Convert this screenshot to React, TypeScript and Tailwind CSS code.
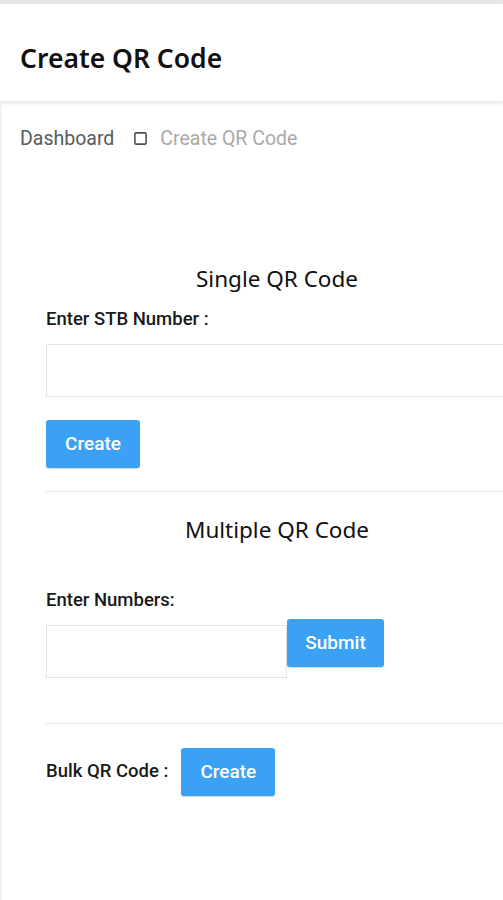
import { Square } from 'lucide-react';

const heading = "font-['Noto_Sans',sans-serif]";
const body = "font-['Roboto',sans-serif]";

function BlueButton({ label, className = '' }: { label: string; className?: string }) {
  return (
    <button
      className={`h-[48px] w-[94px] shrink-0 rounded-[3px] bg-[#3aa1f4] text-[19px] font-medium text-white shadow-[0_1px_1px_rgba(0,0,0,0.15)] ${body} ${className}`}
    >
      {label}
    </button>
  );
}

export default function App() {
  return (
    <div className="h-[900px] w-[503px] overflow-hidden bg-white">
      <div className="h-[4px] bg-[#e6e6e6]" />
      <header className="flex h-[98px] items-center bg-white px-[20px] pt-[12px] shadow-[0_2px_3px_rgba(0,0,0,0.08)] border-b border-[#e9e9e9]">
        <h1 className={`${heading} text-[26.5px] font-semibold text-[#111]`}>Create QR Code</h1>
      </header>

      <div className="h-[800px] border-l-2 border-[#f3f3f3]">
        <nav className={`flex items-center pl-[18px] pt-[22px] text-[19.5px] ${body}`}>
          <span className="text-[#545b61]">Dashboard</span>
          <Square className="ml-[19px] h-[15px] w-[15px] text-[#4a4f54]" strokeWidth={2.5} />
          <span className="ml-[12px] text-[#a9a9a9]">Create QR Code</span>
        </nav>

        <section className="ml-[44px] mt-[111px] w-[462px]">
          <h2 className={`${heading} text-center text-[22.5px] leading-[30px] text-[#111]`}>Single QR Code</h2>
          <label className={`${body} mt-[14px] block text-[18.5px] font-medium leading-[22px] text-[#1a1a1a]`}>
            Enter STB Number :
          </label>
          <input className="mt-[14px] block h-[53px] w-full border border-[#e4e4e4] bg-white outline-none" />
          <BlueButton label="Create" className="mt-[23px]" />
          <div className="mt-[23px] h-px bg-[#e6e6e6]" />

          <h2 className={`${heading} mt-[23px] text-center text-[22.5px] leading-[30px] text-[#111]`}>Multiple QR Code</h2>
          <label className={`${body} mt-[44px] block text-[18.5px] font-medium leading-[22px] text-[#1a1a1a]`}>
            Enter Numbers:
          </label>
          <div className="mt-[8px] flex items-start">
            <input className="mt-[6px] block h-[53px] w-[241px] border border-[#e4e4e4] bg-white outline-none" />
            <BlueButton label="Submit" className="w-[97px]" />
          </div>
          <div className="mt-[45px] h-px bg-[#e6e6e6]" />

          <div className="mt-[24px] flex items-center">
            <span className={`${body} text-[18.5px] font-medium text-[#1a1a1a]`}>Bulk QR Code :</span>
            <BlueButton label="Create" className="ml-[13px]" />
          </div>
        </section>
      </div>
    </div>
  );
}
